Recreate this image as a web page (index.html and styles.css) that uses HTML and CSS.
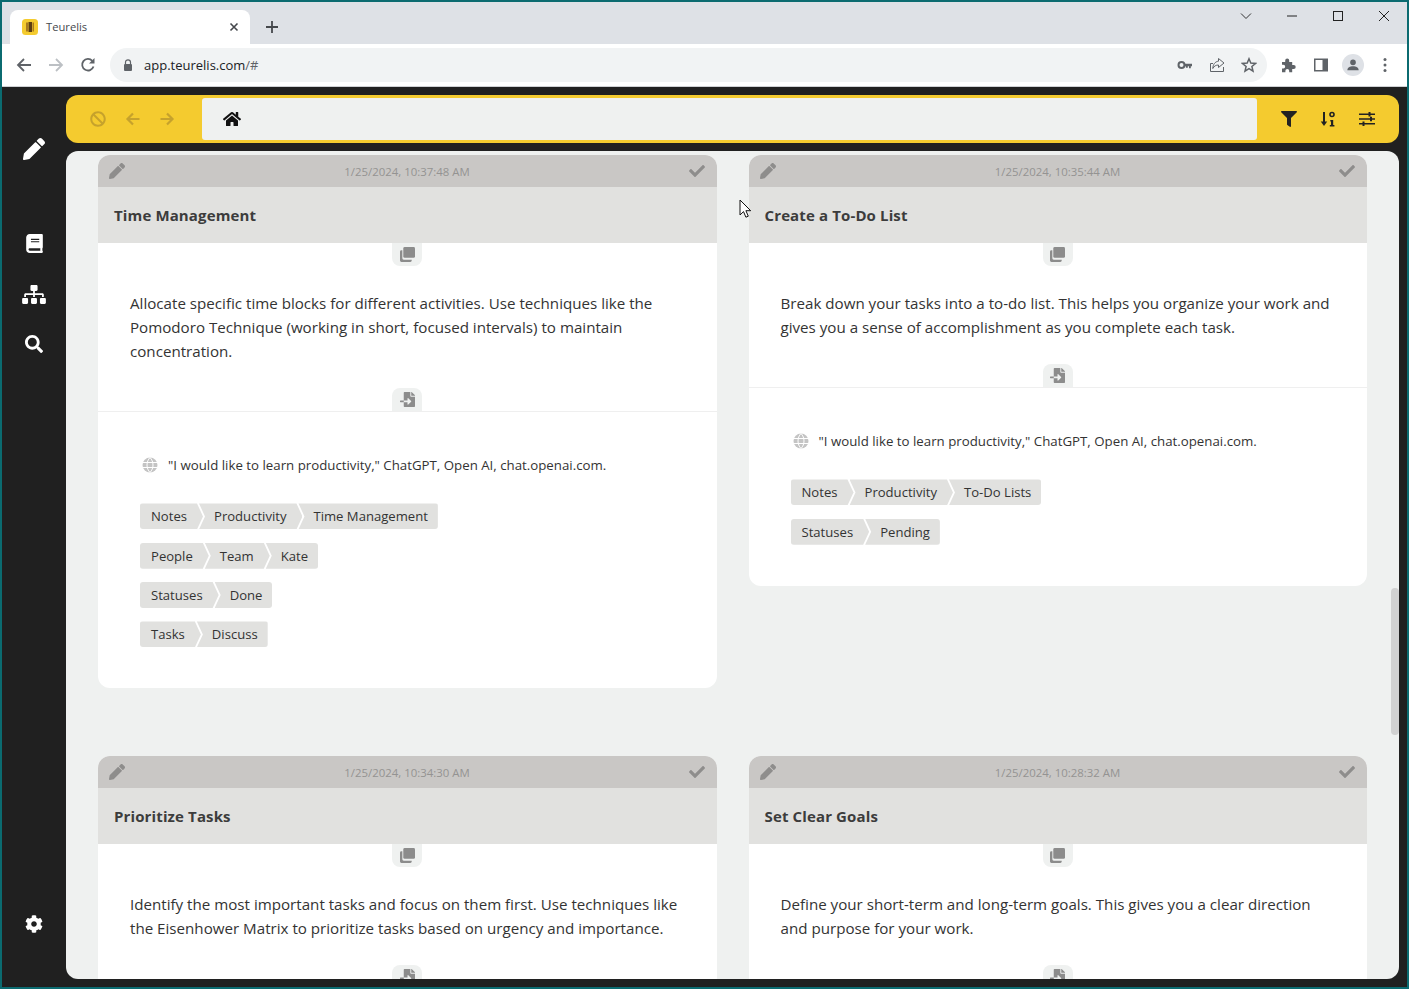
FILE: index.html
```html
<!DOCTYPE html>
<html>
<head>
  <meta charset="UTF-8">
  <meta name="viewport" content="width=device-width,initial-scale=1">
  <title>Teurelis</title>
  <link rel="stylesheet" href="styles.css">
</head>
<body>
  <svg class="sprite" xmlns="http://www.w3.org/2000/svg">
    <symbol id="i-pencil" viewBox="0 0 512 512"><path d="M497.9 142.1l-46.1 46.1c-4.7 4.7-12.3 4.7-17 0l-111-111c-4.7-4.7-4.7-12.3 0-17l46.1-46.1c18.7-18.7 49.1-18.7 67.9 0l60.1 60.1c18.8 18.7 18.8 49.1 0 67.9zM284.2 99.8L21.6 362.4.4 483.9c-2.9 16.4 11.4 30.6 27.8 27.8l121.5-21.3 262.6-262.6c4.7-4.7 4.7-12.3 0-17l-111-111c-4.8-4.7-12.4-4.7-17.1 0z"/></symbol>
    <symbol id="i-check" viewBox="0 0 512 512"><path d="M173.898 439.404l-166.4-166.4c-9.997-9.997-9.997-26.206 0-36.204l36.203-36.204c9.997-9.998 26.207-9.998 36.204 0L192 312.69 432.095 72.596c9.997-9.997 26.207-9.997 36.204 0l36.203 36.204c9.997 9.997 9.997 26.206 0 36.204l-294.4 294.401c-9.998 9.997-26.207 9.997-36.204-.001z"/></symbol>
    <symbol id="i-copy" viewBox="0 0 16 16"><path d="M5 0h9.500A1.500 1.500 0 0 1 16 1.500V10a1.500 1.500 0 0 1-1.500 1.500H5A1.500 1.500 0 0 1 3.500 10V1.500A1.500 1.500 0 0 1 5 0z"/><path d="M2.500 3.500V12A1.500 1.500 0 0 0 4 13.500h8.500v1A1.500 1.500 0 0 1 11 16H1.500A1.500 1.500 0 0 1 0 14.500V5a1.500 1.500 0 0 1 1.500-1.500z"/></symbol>
    <symbol id="i-import" viewBox="0 0 512 512"><path d="M16 288c-8.800 0-16 7.200-16 16v32c0 8.800 7.200 16 16 16h112v-64zm489-183L407.100 7c-4.500-4.500-10.600-7-17-7H384v128h128v-6.100c0-6.300-2.500-12.400-7-16.900zm-153 31V0H152c-13.300 0-24 10.700-24 24v264h128v-65.200c0-14.300 17.300-21.400 27.400-11.300L379 308c6.600 6.700 6.600 17.400 0 24l-95.700 96.400c-10.100 10.100-27.400 3-27.400-11.300V352H128v136c0 13.300 10.700 24 24 24h336c13.300 0 24-10.700 24-24V160H376c-13.200 0-24-10.800-24-24z"/></symbol>
    <symbol id="i-globe" viewBox="0 0 16 16"><circle cx="8" cy="8" r="7.500"/><path d="M.5 5.500h15M.5 10.500h15M8 .5c-4 4-4 11 0 15M8 .5c4 4 4 11 0 15" fill="none" stroke="#fff" stroke-width="1"/></symbol>
    <symbol id="i-arrow" viewBox="0 0 16 16"><path d="M14.500 8h-12M8 2.500 2.500 8 8 13.500" fill="none" stroke="currentColor" stroke-width="2.200"/></symbol>
  </svg>

  <div class="window">
    <div class="tabstrip">
      <div class="tab">
        <svg class="favicon" viewBox="0 0 16 16"><rect width="16" height="16" rx="3.500" fill="#f4cb2f"/><path d="M4 3.500h2v9H4z" fill="#a87a1e"/><path d="M6.500 3h3.500v10H6.500z" fill="#5c3d12"/><path d="M10.500 3.500h1.500v9h-1.500z" fill="#a87a1e"/></svg>
        <span class="tab-title">Teurelis</span>
        <svg class="tab-close" viewBox="0 0 10 10"><path d="M1.500 1.500l7 7M8.500 1.500l-7 7" stroke="#45484c" stroke-width="1.600"/></svg>
      </div>
      <svg class="new-tab" viewBox="0 0 12 12"><path d="M6 0v12M0 6h12" stroke="#45484c" stroke-width="1.800"/></svg>
      <div class="win-controls">
        <svg class="win-btn win-chevron" viewBox="0 0 12 12"><path d="M1 3.500l5 5 5-5" fill="none" stroke="#333" stroke-width="1"/></svg>
        <svg class="win-btn" viewBox="0 0 12 12"><path d="M1 6h10" stroke="#222" stroke-width="1"/></svg>
        <svg class="win-btn" viewBox="0 0 12 12"><rect x="1.500" y="1.500" width="9" height="9" fill="none" stroke="#222" stroke-width="1"/></svg>
        <svg class="win-btn" viewBox="0 0 12 12"><path d="M1 1l10 10M11 1L1 11" stroke="#222" stroke-width="1"/></svg>
      </div>
    </div>

    <div class="toolbar">
      <svg class="nav-icon" viewBox="0 0 16 16"><path d="M15 8H2M8 2 2 8l6 6" fill="none" stroke="#5f6368" stroke-width="1.800"/></svg>
      <svg class="nav-icon" viewBox="0 0 16 16"><path d="M1 8h13M8 2l6 6-6 6" fill="none" stroke="#bcc0c4" stroke-width="1.800"/></svg>
      <svg class="nav-icon" viewBox="0 0 16 16"><path d="M13.500 9.500A5.800 5.800 0 1 1 12.300 3.800" fill="none" stroke="#5f6368" stroke-width="1.800"/><path d="M14.500 1v5.500H9z" fill="#5f6368"/></svg>
      <div class="omnibox">
        <svg class="lock" viewBox="0 0 10 12"><path d="M2.500 5V3.300a2.500 2.500 0 0 1 5 0V5" fill="none" stroke="#5f6368" stroke-width="1.200"/><rect x="1" y="5" width="8" height="7" rx="1" fill="#5f6368"/></svg>
        <span class="url">app.teurelis.com<span class="url-rest">/#</span></span>
        <svg class="omni-icon" viewBox="0 0 16 16"><circle cx="4.500" cy="8" r="3" fill="none" stroke="#5f6368" stroke-width="2"/><path d="M7.500 6.800H15v2.400h-1.200v2h-1.800v-2h-1.200v1.500H8.900V9.200H7.500z" fill="#5f6368"/></svg>
        <svg class="omni-icon" viewBox="0 0 16 16"><path d="M14.500 10v4.500h-13v-8H4" fill="none" stroke="#5f6368" stroke-width="1"/><path d="M9.500 1.500 15 6l-5.500 4.500V8C7 8 5 9 3.800 11.500 4 7.500 6 4.500 9.500 4.200z" fill="none" stroke="#5f6368" stroke-width="1"/></svg>
        <svg class="omni-icon" viewBox="0 0 16 16"><path d="M8 1.800l1.800 4.300 4.700.4-3.600 3 1.100 4.600L8 11.700l-4 2.400 1.100-4.600-3.600-3 4.700-.4z" fill="none" stroke="#5f6368" stroke-width="1.500"/></svg>
      </div>
      <div class="ext-icons">
        <svg class="ext-icon" viewBox="0 0 16 16"><path d="M1 5h3.200V3.500a2 2 0 0 1 4 0V5h3v3h1.500a2 2 0 0 1 0 4h-1.500v3.200H8.200v-1.400a1.900 1.900 0 0 0-3.800 0v1.400H1v-3.700h1.300a1.900 1.900 0 0 0 0-3.800H1z" fill="#5f6368"/></svg>
        <svg class="ext-icon" viewBox="0 0 16 16"><path d="M1 1.500h14v13H1z" fill="#5f6368"/><path d="M2.500 3h7v10h-7z" fill="#fff"/></svg>
        <span class="avatar"><svg viewBox="0 0 16 16"><circle cx="8" cy="5" r="3.200" fill="#5f6368"/><path d="M1.500 14c0-3.200 3-4.700 6.500-4.700s6.500 1.500 6.500 4.700z" fill="#5f6368"/></svg></span>
        <svg class="ext-icon" viewBox="0 0 16 16"><circle cx="8" cy="2.500" r="1.500" fill="#5f6368"/><circle cx="8" cy="8" r="1.500" fill="#5f6368"/><circle cx="8" cy="13.500" r="1.500" fill="#5f6368"/></svg>
      </div>
    </div>

    <div class="app">
      <nav class="sidebar">
        <a class="side-item side-edit"><svg class="side-icon"><use href="#i-pencil"/></svg></a>
        <a class="side-item side-first"><svg class="side-icon side-book" viewBox="0 0 448 512"><path d="M448 360V24c0-13.300-10.700-24-24-24H96C43 0 0 43 0 96v320c0 53 43 96 96 96h328c13.300 0 24-10.700 24-24v-16c0-7.500-3.500-14.300-8.900-18.700-4.200-15.400-4.200-59.300 0-74.700 5.400-4.300 8.900-11.100 8.900-18.600zM128 134c0-3.300 2.700-6 6-6h212c3.300 0 6 2.700 6 6v20c0 3.300-2.700 6-6 6H134c-3.300 0-6-2.700-6-6v-20zm0 64c0-3.300 2.700-6 6-6h212c3.300 0 6 2.700 6 6v20c0 3.300-2.700 6-6 6H134c-3.300 0-6-2.700-6-6v-20zm253.400 250H96c-17.700 0-32-14.300-32-32 0-17.600 14.400-32 32-32h285.400c-1.900 17.100-1.900 46.900 0 64z"/></svg></a>
        <a class="side-item side-tree"><svg class="side-icon side-map" viewBox="0 0 640 512"><path d="M128 352H32c-17.670 0-32 14.330-32 32v96c0 17.670 14.330 32 32 32h96c17.670 0 32-14.330 32-32v-96c0-17.670-14.330-32-32-32zm-24-80h192v48h48v-48h192v48h48v-57.590c0-21.170-17.230-38.410-38.410-38.410H344v-64h40c17.670 0 32-14.330 32-32V32c0-17.670-14.330-32-32-32H256c-17.670 0-32 14.330-32 32v96c0 17.670 14.330 32 32 32h40v64H94.410C73.230 224 56 241.230 56 262.410V320h48v-48zm264 80h-96c-17.670 0-32 14.330-32 32v96c0 17.670 14.330 32 32 32h96c17.670 0 32-14.330 32-32v-96c0-17.670-14.330-32-32-32zm240 0h-96c-17.670 0-32 14.330-32 32v96c0 17.670 14.330 32 32 32h96c17.670 0 32-14.330 32-32v-96c0-17.670-14.330-32-32-32z"/></svg></a>
        <a class="side-item"><svg class="side-icon side-small" viewBox="0 0 512 512"><path d="M505 442.700L405.300 343c-4.500-4.500-10.600-7-17-7H372c27.600-35.300 44-79.700 44-128C416 93.100 322.900 0 208 0S0 93.100 0 208s93.100 208 208 208c48.300 0 92.700-16.400 128-44v16.300c0 6.400 2.500 12.500 7 17l99.700 99.700c9.400 9.400 24.600 9.400 33.900 0l28.300-28.300c9.400-9.400 9.400-24.600.1-34zM208 336c-70.700 0-128-57.200-128-128 0-70.700 57.200-128 128-128 70.700 0 128 57.200 128 128 0 70.700-57.200 128-128 128z"/></svg></a>
        <a class="side-item side-settings"><svg class="side-icon side-small" viewBox="0 0 512 512"><path d="M487.400 315.700l-42.600-24.600c4.300-23.200 4.300-47 0-70.200l42.600-24.600c4.900-2.800 7.100-8.600 5.500-14-11.100-35.600-30-67.800-54.700-94.600-3.800-4.100-10-5.100-14.800-2.300L380.800 110c-17.900-15.400-38.500-27.300-60.800-35.100V25.800c0-5.600-3.900-10.500-9.400-11.700-36.700-8.200-74.300-7.800-109.200 0-5.500 1.200-9.400 6.100-9.400 11.700V75c-22.200 7.900-42.800 19.800-60.800 35.100L88.700 85.500c-4.900-2.800-11-1.900-14.800 2.300-24.700 26.700-43.600 58.900-54.700 94.600-1.700 5.400.6 11.200 5.500 14L67.300 221c-4.300 23.200-4.300 47 0 70.200l-42.600 24.600c-4.900 2.800-7.100 8.600-5.500 14 11.100 35.600 30 67.800 54.700 94.600 3.800 4.100 10 5.100 14.800 2.300l42.600-24.600c17.900 15.400 38.500 27.300 60.800 35.100v49.200c0 5.600 3.900 10.500 9.400 11.700 36.700 8.200 74.300 7.800 109.200 0 5.500-1.200 9.400-6.100 9.400-11.700v-49.200c22.200-7.900 42.800-19.800 60.800-35.100l42.600 24.600c4.900 2.800 11 1.900 14.800-2.300 24.700-26.700 43.600-58.900 54.700-94.600 1.500-5.500-.7-11.300-5.600-14.100zM256 336c-44.100 0-80-35.900-80-80s35.900-80 80-80 80 35.900 80 80-35.900 80-80 80z"/></svg></a>
      </nav>

      <main class="main">
        <header class="topbar">
          <div class="top-nav">
            <span class="top-btn"><svg class="top-icon dim" viewBox="0 0 512 512"><path d="M256 8C119.034 8 8 119.033 8 256s111.034 248 248 248 248-111.034 248-248S392.967 8 256 8zm130.108 117.892c65.448 65.448 70 165.481 20.677 235.637L150.470 105.216c70.204-49.356 170.226-44.735 235.638 20.676zM125.892 386.108c-65.448-65.448-70-165.481-20.677-235.637L361.530 406.784c-70.203 49.356-170.226 44.736-235.638-20.676z"/></svg></span>
            <span class="top-btn"><svg class="top-icon dim"><use href="#i-arrow"/></svg></span>
            <span class="top-btn"><svg class="top-icon dim flip"><use href="#i-arrow"/></svg></span>
          </div>
          <div class="crumbs">
            <svg class="home" viewBox="0 0 576 512"><path d="M280.370 148.260L96 300.110V464a16 16 0 0 0 16 16l112.060-.29a16 16 0 0 0 15.920-16V368a16 16 0 0 1 16-16h64a16 16 0 0 1 16 16v95.640a16 16 0 0 0 16 16.050L464 480a16 16 0 0 0 16-16V300L295.670 148.260a12.190 12.190 0 0 0-15.300 0zM571.600 251.470L488 182.560V44.050a12 12 0 0 0-12-12h-56a12 12 0 0 0-12 12v72.610L318.470 43a48 48 0 0 0-61 0L4.340 251.470a12 12 0 0 0-1.600 16.900l25.500 31A12 12 0 0 0 45.150 301l235.220-193.740a12.190 12.190 0 0 1 15.300 0L530.900 301a12 12 0 0 0 16.900-1.600l25.500-31a12 12 0 0 0-1.700-16.930z"/></svg>
          </div>
          <div class="top-tools">
            <span class="tool-btn"><svg class="tool-icon" viewBox="0 0 512 512"><path d="M487.976 0H24.028C2.710 0-8.047 25.866 7.058 40.971L192 225.941V432c0 7.831 3.821 15.170 10.237 19.662l80 55.980C298.020 518.690 320 507.493 320 487.980V225.941l184.947-184.970C520.021 25.896 509.338 0 487.976 0z"/></svg></span>
            <span class="tool-btn"><svg class="tool-icon" viewBox="0 0 16 16"><path d="M4 1v11" stroke="#222" stroke-width="2"/><path d="M.8 10.500h6.400L4 15z"/><circle cx="12" cy="3.500" r="2" fill="none" stroke="#222" stroke-width="1.600"/><path d="M10.300 9h2.900v5h1.200v1.500h-4.600V14h1.200v-3.500h-.7z"/></svg></span>
            <span class="tool-btn"><svg class="tool-icon" viewBox="0 0 16 16"><path d="M0 2.500h16v1.600H0zM0 7.200h16v1.600H0zM0 11.900h16v1.600H0z"/><path d="M9.500 1h2v4.500h-2zM11 5.700h2v4.500h-2zM3.500 10.400h2v4.500h-2z"/></svg></span>
          </div>
        </header>

        <section class="panel">
          <div class="notes">
            <article class="note">
              <div class="note-head">
                <svg class="head-icon"><use href="#i-pencil"/></svg>
                <span class="note-date">1/25/2024, 10:37:48 AM</span>
                <svg class="head-icon"><use href="#i-check"/></svg>
              </div>
              <h3 class="note-title">Time Management</h3>
              <div class="note-main">
                <span class="tab-down"><svg class="tab-icon"><use href="#i-copy"/></svg></span>
                <p class="note-text">Allocate specific time blocks for different activities. Use techniques like the Pomodoro Technique (working in short, focused intervals) to maintain concentration.</p>
                <span class="tab-up"><svg class="tab-icon"><use href="#i-import"/></svg></span>
              </div>
              <div class="note-meta">
                <div class="source"><svg class="globe"><use href="#i-globe"/></svg><span>"I would like to learn productivity," ChatGPT, Open AI, chat.openai.com.</span></div>
                <div class="tag-rows">
                  <div class="chain"><span class="tag">Notes</span><span class="tag">Productivity</span><span class="tag">Time Management</span></div>
                  <div class="chain"><span class="tag">People</span><span class="tag">Team</span><span class="tag">Kate</span></div>
                  <div class="chain"><span class="tag">Statuses</span><span class="tag">Done</span></div>
                  <div class="chain"><span class="tag">Tasks</span><span class="tag">Discuss</span></div>
                </div>
              </div>
            </article>

            <article class="note">
              <div class="note-head">
                <svg class="head-icon"><use href="#i-pencil"/></svg>
                <span class="note-date">1/25/2024, 10:35:44 AM</span>
                <svg class="head-icon"><use href="#i-check"/></svg>
              </div>
              <h3 class="note-title">Create a To-Do List</h3>
              <div class="note-main">
                <span class="tab-down"><svg class="tab-icon"><use href="#i-copy"/></svg></span>
                <p class="note-text">Break down your tasks into a to-do list. This helps you organize your work and gives you a sense of accomplishment as you complete each task.</p>
                <span class="tab-up"><svg class="tab-icon"><use href="#i-import"/></svg></span>
              </div>
              <div class="note-meta">
                <div class="source"><svg class="globe"><use href="#i-globe"/></svg><span>"I would like to learn productivity," ChatGPT, Open AI, chat.openai.com.</span></div>
                <div class="tag-rows">
                  <div class="chain"><span class="tag">Notes</span><span class="tag">Productivity</span><span class="tag">To-Do Lists</span></div>
                  <div class="chain"><span class="tag">Statuses</span><span class="tag">Pending</span></div>
                </div>
              </div>
            </article>

            <article class="note">
              <div class="note-head">
                <svg class="head-icon"><use href="#i-pencil"/></svg>
                <span class="note-date">1/25/2024, 10:34:30 AM</span>
                <svg class="head-icon"><use href="#i-check"/></svg>
              </div>
              <h3 class="note-title">Prioritize Tasks</h3>
              <div class="note-main">
                <span class="tab-down"><svg class="tab-icon"><use href="#i-copy"/></svg></span>
                <p class="note-text">Identify the most important tasks and focus on them first. Use techniques like the Eisenhower Matrix to prioritize tasks based on urgency and importance.</p>
                <span class="tab-up"><svg class="tab-icon"><use href="#i-import"/></svg></span>
              </div>
            </article>

            <article class="note">
              <div class="note-head">
                <svg class="head-icon"><use href="#i-pencil"/></svg>
                <span class="note-date">1/25/2024, 10:28:32 AM</span>
                <svg class="head-icon"><use href="#i-check"/></svg>
              </div>
              <h3 class="note-title">Set Clear Goals</h3>
              <div class="note-main">
                <span class="tab-down"><svg class="tab-icon"><use href="#i-copy"/></svg></span>
                <p class="note-text">Define your short-term and long-term goals. This gives you a clear direction and purpose for your work.</p>
                <span class="tab-up"><svg class="tab-icon"><use href="#i-import"/></svg></span>
              </div>
            </article>
          </div>
          <div class="scrollbar"></div>
        </section>
      </main>
    </div>
  </div>

  <svg class="cursor" viewBox="0 0 13 20"><path d="M1 1v15l3.500-3.400 2.400 5.600 2.400-1-2.400-5.500h4.800z" fill="#fff" stroke="#111" stroke-width="1"/></svg>
</body>
</html>
```

FILE: styles.css
```css
html, body {
  margin: 0;
  height: 100%;
}

body {
  background: #0b6b70;
  font-family: "Open Sans", "Noto Sans", sans-serif;
  color: #333333;
  overflow: hidden;
}

.sprite {
  display: none;
}

.window {
  box-sizing: border-box;
  height: 989px;
  padding: 2px;
  display: flex;
  flex-direction: column;
}

/* browser chrome */

.tabstrip {
  height: 42px;
  flex: none;
  background: #dee1e6;
  display: flex;
  align-items: flex-end;
  padding-left: 8px;
}

.tab {
  width: 240px;
  height: 34px;
  background: #ffffff;
  border-radius: 8px 8px 0 0;
  display: flex;
  align-items: center;
  padding: 0 12px;
  box-sizing: border-box;
}

.favicon {
  width: 16px;
  height: 16px;
  flex: none;
}

.tab-title {
  margin: 0 0 2px 8px;
  font-size: 11.2px;
  color: #45484c;
  flex: 1;
}

.tab-close {
  width: 10px;
  height: 10px;
  margin-right: -1px;
}

.new-tab {
  width: 12px;
  height: 12px;
  margin: 0 0 11px 16px;
}

.win-controls {
  margin-left: auto;
  align-self: flex-start;
  display: flex;
  padding-top: 8px;
  margin-right: 17px;
}

.win-btn {
  width: 12px;
  height: 12px;
  margin-left: 34px;
}

.win-chevron {
  margin-left: 0;
}

.toolbar {
  height: 42px;
  flex: none;
  background: #ffffff;
  border-bottom: 1px solid #cfd1d4;
  display: flex;
  align-items: center;
  padding-left: 14px;
}

.nav-icon {
  width: 16px;
  height: 16px;
  margin-right: 16px;
  flex: none;
}

.omnibox {
  flex: none;
  width: 1157px;
  height: 34px;
  margin-left: -2px;
  box-sizing: border-box;
  background: #f1f3f4;
  border-radius: 17px;
  display: flex;
  align-items: center;
  padding: 0 10px 0 13px;
}

.lock {
  width: 10px;
  height: 12px;
}

.url {
  margin-left: 11px;
  font-size: 13px;
  color: #202124;
  flex: 1;
}

.url-rest {
  color: #5f6368;
}

.omni-icon {
  width: 16px;
  height: 16px;
  margin-left: 16px;
}

.ext-icons {
  flex: none;
  display: flex;
  align-items: center;
  margin-left: 14px;
}

.ext-icon {
  width: 16px;
  height: 16px;
  margin-right: 16px;
}

.ext-icon:last-child {
  margin-right: 0;
}

.avatar {
  width: 22px;
  height: 22px;
  margin: 0 13px 0 -3px;
  border-radius: 50%;
  background: #dee1e6;
  display: flex;
  align-items: center;
  justify-content: center;
}

.avatar svg {
  width: 14px;
  height: 14px;
}

/* app */

.app {
  flex: 1;
  min-height: 0;
  display: flex;
  background: #202020;
}

.sidebar {
  width: 64px;
  flex: none;
  box-sizing: border-box;
  padding: 37px 0 38px;
  display: flex;
  flex-direction: column;
}

.side-item {
  height: 50px;
  flex: none;
  display: flex;
  align-items: center;
  justify-content: center;
}

.side-first {
  margin-top: 44px;
}

.side-tree {
  margin-top: 1px;
}

.side-settings {
  margin-top: auto;
}

.side-icon {
  width: 22px;
  height: 22px;
  fill: #ffffff;
}

.side-book {
  width: 17px;
  height: 19px;
}

.side-map {
  width: 24px;
  height: 19px;
}

.side-small {
  width: 18px;
  height: 18px;
}

.main {
  flex: 1;
  min-width: 0;
  padding: 8px 8px 8px 0;
  display: flex;
  flex-direction: column;
  gap: 8px;
}

.topbar {
  height: 48px;
  flex: none;
  background: #f4cb2f;
  border-radius: 12px;
  display: flex;
  align-items: center;
}

.top-nav {
  display: flex;
  padding-left: 15px;
  margin-right: 19px;
}

.top-btn {
  width: 34px;
  display: flex;
  justify-content: center;
}

.top-btn + .top-btn {
  padding-left: 1px;
  margin-right: -1px;
}

.top-icon {
  width: 16px;
  height: 16px;
  fill: #c6a22c;
  color: #c6a22c;
}

.flip {
  transform: scaleX(-1);
}

.crumbs {
  flex: 1;
  height: 42px;
  background: #eff1f0;
  border-radius: 3px;
  display: flex;
  align-items: center;
  padding-left: 21px;
}

.home {
  width: 18px;
  height: 16px;
  fill: #111111;
}

.top-tools {
  display: flex;
  padding: 0 13px 0 12px;
}

.tool-btn {
  width: 39px;
  display: flex;
  justify-content: center;
}

.tool-icon {
  width: 16px;
  height: 16px;
  fill: #222222;
}

.panel {
  flex: 1;
  min-height: 0;
  background: #eff1f0;
  border-radius: 12px;
  overflow: hidden;
  position: relative;
}

.notes {
  padding: 4px 32px 0;
  display: grid;
  grid-template-columns: 1fr 1fr;
  column-gap: 32px;
  row-gap: 68px;
  align-items: start;
}

.note {
  background: #ffffff;
  border-radius: 12px;
}

.note-head {
  height: 32px;
  background: #c9c7c5;
  border-radius: 12px 12px 0 0;
  display: flex;
  align-items: center;
  justify-content: space-between;
  padding: 0 11.5px 0 11px;
}

.head-icon {
  width: 16px;
  height: 16px;
  fill: #8e8d8c;
}

.note-date {
  font-size: 11.4px;
  color: #949392;
}

.note-title {
  margin: 0;
  height: 56px;
  line-height: 56px;
  padding-left: 16px;
  background: #e1e1df;
  font-size: 15px;
  letter-spacing: 0.13px;
  font-weight: 700;
  color: #3c3c3c;
}

.note-main {
  display: flex;
  flex-direction: column;
  align-items: center;
  border-bottom: 1px solid #efefef;
}

.tab-down, .tab-up {
  width: 30px;
  height: 23px;
  background: #eff1f0;
  display: flex;
  align-items: center;
  justify-content: center;
}

.tab-down {
  border-radius: 0 0 8px 8px;
}

.tab-up {
  border-radius: 8px 8px 0 0;
}

.tab-icon {
  width: 15px;
  height: 15px;
  fill: #8c8c8c;
}

.note-text {
  box-sizing: border-box;
  width: 100%;
  margin: 25px 0;
  padding: 0 32px;
  font-size: 15.15px;
  line-height: 24px;
}

.note-meta {
  padding: 41px 42px;
}

.source {
  display: flex;
  align-items: center;
  height: 24px;
  padding-left: 2px;
  font-size: 13.27px;
}

.globe {
  width: 16px;
  height: 16px;
  margin-right: 10px;
  fill: #c4c4c4;
}

.tag-rows {
  margin-top: 26.4px;
  display: flex;
  flex-direction: column;
  align-items: flex-start;
  gap: 13.33px;
}

.chain {
  display: flex;
  border-radius: 3px;
  overflow: hidden;
}

.tag {
  height: 26px;
  line-height: 26px;
  font-size: 13.1px;
  background: #e1e1df;
  padding: 0 16px 0 15px;
  margin-left: -4px;
  clip-path: polygon(0 0, calc(100% - 6px) 0, 100% 50%, calc(100% - 6px) 100%, 0 100%, 6px 50%);
}

.tag:first-child {
  margin-left: 0;
  padding-left: 11px;
  clip-path: polygon(0 0, calc(100% - 6px) 0, 100% 50%, calc(100% - 6px) 100%, 0 100%);
}

.tag:last-child {
  padding-right: 10px;
  clip-path: polygon(0 0, 100% 0, 100% 100%, 0 100%, 6px 50%);
}

.scrollbar {
  position: absolute;
  right: 0;
  top: 437px;
  width: 8px;
  height: 147px;
  background: #d1d1d1;
  border-radius: 4px;
}

.cursor {
  position: absolute;
  left: 739px;
  top: 199px;
  width: 13px;
  height: 20px;
}
```
